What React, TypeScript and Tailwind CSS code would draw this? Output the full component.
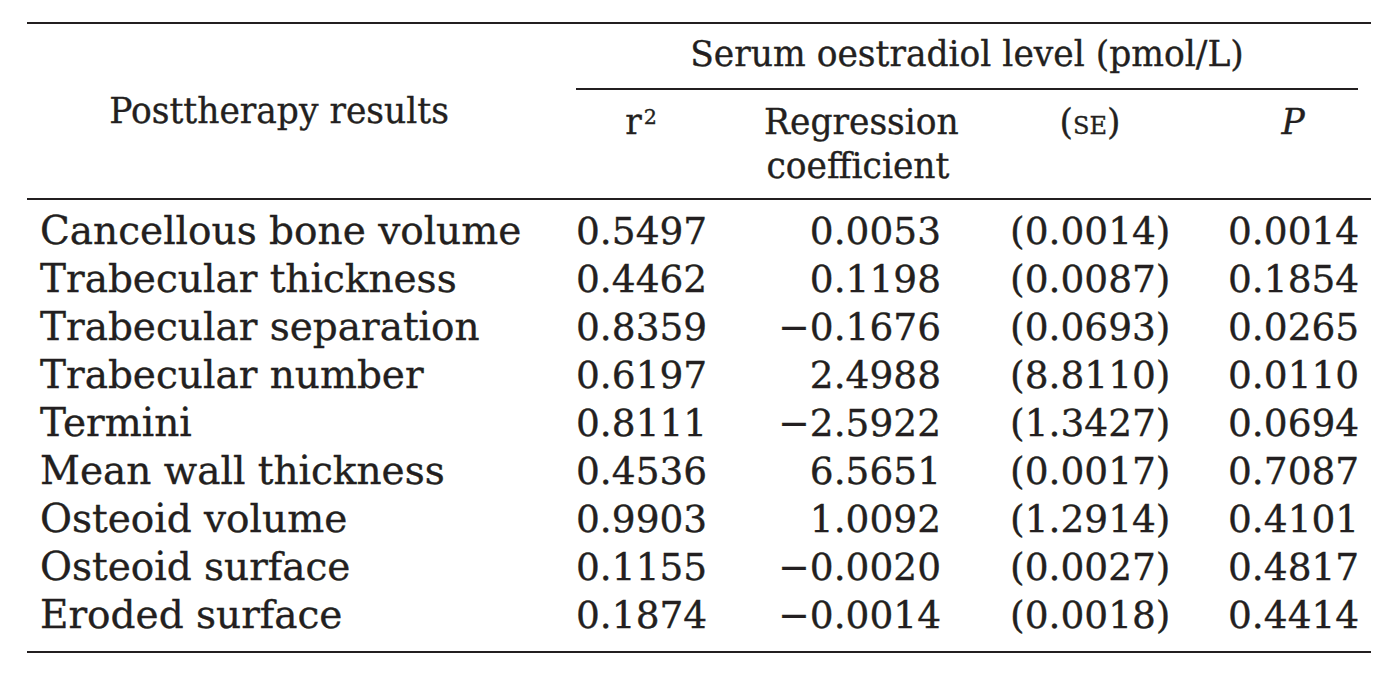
import * as React from 'react';

/* Journal-style regression table: posttherapy bone results vs serum oestradiol. */

type Row = { label: string; r2: string; coef: string; se: string; p: string };

const rows: Row[] = [
  { label: 'Cancellous bone volume', r2: '0.5497', coef: '0.0053', se: '(0.0014)', p: '0.0014' },
  { label: 'Trabecular thickness', r2: '0.4462', coef: '0.1198', se: '(0.0087)', p: '0.1854' },
  { label: 'Trabecular separation', r2: '0.8359', coef: '\u22120.1676', se: '(0.0693)', p: '0.0265' },
  { label: 'Trabecular number', r2: '0.6197', coef: '2.4988', se: '(8.8110)', p: '0.0110' },
  { label: 'Termini', r2: '0.8111', coef: '\u22122.5922', se: '(1.3427)', p: '0.0694' },
  { label: 'Mean wall thickness', r2: '0.4536', coef: '6.5651', se: '(0.0017)', p: '0.7087' },
  { label: 'Osteoid volume', r2: '0.9903', coef: '1.0092', se: '(1.2914)', p: '0.4101' },
  { label: 'Osteoid surface', r2: '0.1155', coef: '\u22120.0020', se: '(0.0027)', p: '0.4817' },
  { label: 'Eroded surface', r2: '0.1874', coef: '\u22120.0014', se: '(0.0018)', p: '0.4414' },
];

const cols = 'grid grid-cols-[478px_130px_188px_160px_130px] gap-x-[58px] px-[13px]';

export default function App() {
  return (
    <div className="h-[674px] w-[1391px] bg-white pt-[22px] font-['DejaVu_Serif','Liberation_Serif',serif] text-[#231f20] [-webkit-text-stroke:0.35px_#231f20]">
      <div className="ml-[27px] w-[1344px] border-y-2 border-[#231f20]">
        {/* Header */}
        <div className={cols + ' border-b-2 border-[#231f20] text-[34.5px]'}>
          <div className="row-span-3 flex items-center justify-center leading-[44px]">
            Posttherapy results
          </div>
          <div className="col-span-4 pt-[10px] text-center leading-[40px]">
            Serum oestradiol level (pmol/L)
          </div>
          <div className="col-span-4 mt-[14px] h-[2px] bg-[#231f20]" />
          <div className="col-span-4 grid grid-cols-subgrid pb-[10px] pt-[10px] text-center leading-[44px]">
            <div>
              r<sup className="ml-[2px] text-[0.6em]">2</sup>
            </div>
            <div>
              Regression
              <br />
              coefficient
            </div>
            <div>
              (<span className="[font-variant-caps:small-caps]">se</span>)
            </div>
            <div className="italic">P</div>
          </div>
        </div>

        {/* Body */}
        <div className="pb-[12px] pt-[7px]">
          {rows.map((r) => (
            <div key={r.label} className={cols + ' leading-[48px]'}>
              <div className="text-[39px] whitespace-nowrap">{r.label}</div>
              <div className="text-center text-[37.5px]">{r.r2}</div>
              <div className="pr-[11px] text-right text-[37.5px] whitespace-nowrap">{r.coef}</div>
              <div className="text-center text-[37.5px]">{r.se}</div>
              <div className="text-right text-[37.5px]">{r.p}</div>
            </div>
          ))}
        </div>
      </div>
    </div>
  );
}
